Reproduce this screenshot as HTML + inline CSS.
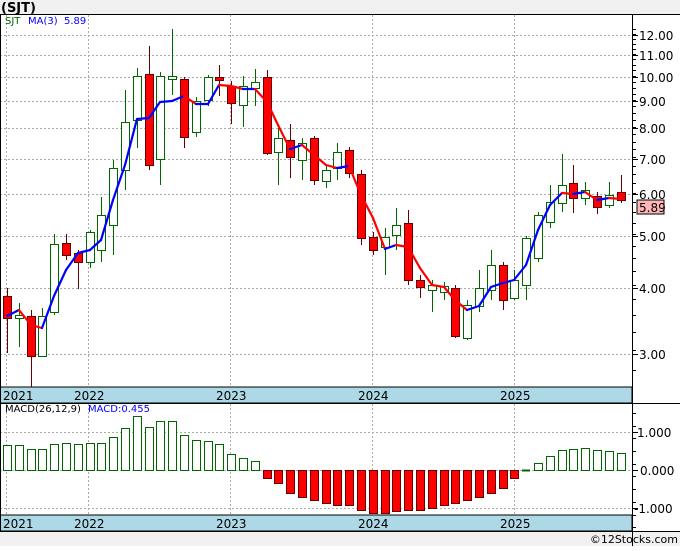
<!DOCTYPE html>
<html><head><meta charset="utf-8"><style>
body{margin:0;width:680px;height:546px;background:#fff;overflow:hidden;font-family:"Liberation Sans",sans-serif}
</style></head><body>
<svg id="s" width="680" height="546" xmlns="http://www.w3.org/2000/svg" font-family="DejaVu Sans, sans-serif">
<rect x="0" y="0" width="680" height="546" fill="#fff"/>
<rect x="0" y="0" width="680" height="14" fill="#f0f0f0"/>
<rect x="0" y="531" width="680" height="15" fill="#f0f0f0"/>
<text x="1" y="12" font-size="13" font-weight="bold" fill="#000">(SJT)</text>
<line x1="0" y1="14.5" x2="680" y2="14.5" stroke="#000"/>
<g id="grid" stroke="#aaa" stroke-dasharray="2,2"></g>
<rect x="0" y="387" width="632" height="16" fill="#add8e6" stroke="#000"/>
<rect x="0" y="515" width="632" height="16" fill="#add8e6" stroke="#000"/>
<g font-size="12" fill="#000">
<text x="3" y="400">2021</text><text x="74" y="400">2022</text><text x="216" y="400">2023</text><text x="358" y="400">2024</text><text x="500" y="400">2025</text>
<text x="3" y="528">2021</text><text x="74" y="528">2022</text><text x="216" y="528">2023</text><text x="358" y="528">2024</text><text x="500" y="528">2025</text>
</g>
<line x1="632.5" y1="14" x2="632.5" y2="546" stroke="#000"/>
<line x1="0" y1="403.5" x2="680" y2="403.5" stroke="#000"/>
<line x1="0" y1="531.5" x2="680" y2="531.5" stroke="#000"/>
<line x1="0.5" y1="14" x2="0.5" y2="531" stroke="#000"/>
<g id="c"></g>
<g id="ax" font-size="12" fill="#000"></g>
<text x="5" y="24" font-size="10" fill="#006400">SJT</text>
<text x="28" y="24" font-size="10" fill="#0000ff">MA(3)</text>
<text x="64" y="24" font-size="10" fill="#0000ff">5.89</text>
<text x="5" y="412" font-size="10" fill="#000">MACD(26,12,9)</text>
<text x="88" y="412" font-size="10" fill="#0000ff">MACD:0.455</text>
<rect x="637" y="200" width="27" height="14" fill="#ffb6b6" stroke="#000"/>
<text x="639" y="212" font-size="12" fill="#000">5.89</text>
<text x="678" y="543" font-size="11" fill="#000" text-anchor="end">©12Stocks.com</text>
</svg>
<script>
var N="http://www.w3.org/2000/svg",g=document.getElementById('c'),gr=document.getElementById('grid'),ax=document.getElementById('ax');
function el(p,t,a){var e=document.createElementNS(N,t);for(var k in a)e.setAttribute(k,a[k]);p.appendChild(e);return e}
[6,88,230,372,514].forEach(function(x){el(gr,'line',{x1:x+.5,y1:15,x2:x+.5,y2:387});el(gr,'line',{x1:x+.5,y1:404,x2:x+.5,y2:515})});
var Y=function(p){return 35+Math.log(12/p)*230};
[12,11,10,9,8,7,6,5,4,3].forEach(function(p){var y=Math.round(Y(p));el(gr,'line',{x1:0,y1:y+.5,x2:632,y2:y+.5});el(ax,'line',{x1:632,y1:y+.5,x2:638,y2:y+.5,stroke:'#000'});var t=el(ax,'text',{x:639,y:y+5});t.textContent=p.toFixed(2)});
for(var p=2.8;p<12.5;p+=0.25){var y=Math.round(Y(p));if(y>15&&y<387)el(ax,'line',{x1:632,y1:y+.5,x2:636,y2:y+.5,stroke:'#000'})}
[[432,'1.000',637],[470,'0.000',640],[508,'-1.000',634]].forEach(function(a){el(gr,'line',{x1:0,y1:a[0]+.5,x2:632,y2:a[0]+.5});el(ax,'line',{x1:632,y1:a[0]+.5,x2:638,y2:a[0]+.5,stroke:'#000'});var t=el(ax,'text',{x:a[2],y:a[0]+5});t.textContent=a[1]});
for(var y=413;y<531;y+=12.7)el(ax,'line',{x1:632,y1:Math.round(y)+.5,x2:636,y2:Math.round(y)+.5,stroke:'#000'});
var C=[['r',296,318,288,353],['g',315,318,303,347],['r',316,356,310,387],['g',316,356,308,357],['g',244,312,234,315],['r',243,255,234,260],['r',253,262,250,289],['g',232,262,230,268],['g',215,250,197,262],['g',168,225,160,255],['g',122,170,90,190],['g',76,120,68,148],['r',74,165,46,170],['g',76,159,72,185],['g',76,79,29,95],['r',79,137,77,148],['g',101,132,97,137],['g',77,100,75,106],['r',77,80,65,96],['r',86,103,81,124],['g',86,105,76,127],['g',82,88,69,106],['r',77,153,70,155],['g',138,152,128,185],['r',140,157,124,178],['g',143,160,138,180],['r',138,180,136,185],['g',170,181,165,188],['g',152,168,143,180],['r',150,173,147,178],['r',174,238,170,245],['r',237,250,232,255],['g',237,247,228,275],['g',225,235,208,250],['r',223,280,210,285],['r',280,287,275,298],['g',285,290,280,312],['g',286,292,282,300],['r',288,336,285,338],['g',305,338,300,340],['g',288,306,270,312],['g',265,290,250,300],['r',265,300,262,310],['g',280,298,270,300],['g',238,285,236,300],['g',215,258,212,262],['g',202,222,185,228],['g',185,203,154,212],['r',183,198,165,213],['g',190,198,182,205],['r',196,207,192,214],['g',195,205,182,208],['r',192,200,175,203]];
var X=function(i){return Math.round(7+i*11.8)};
C.forEach(function(c,i){var x=X(i),r=c[0]=='r';el(g,'line',{x1:x+.5,y1:c[3],x2:x+.5,y2:c[4],stroke:r?'#600':'#060','stroke-width':1});el(g,'rect',{x:x-3.5,y:c[1]+.5,width:8,height:Math.max(c[2]-c[1],1),fill:r?'#f00':'#fff',stroke:r?'#600':'#060'})});
var M=[316,310,325,328,296,270,253,250,240,200,165,119,118,102,101,96,104,104,85,86,89,89,102,125,149,145,155,165,168,166,195,218,249,245,247,268,285,287,300,310,306,287,283,280,265,230,205,193,194,192,200,198,199];
for(var i=1;i<M.length;i++)el(g,'line',{x1:X(i-1),y1:M[i-1],x2:X(i),y2:M[i],stroke:M[i]>M[i-1]?'#f00':'#00f','stroke-width':2.2,'stroke-linecap':'round'});
var H=[445,445,449,449,444,443,444,443,443,437,428,416,427,421,421,435,440,441,444,454,458,461,478,483,493,497,500,503,505,505,510,513,513,511,510,510,508,505,503,500,497,493,488,478,471,463,456,450,449,448,450,451,453];
H.forEach(function(h,i){var x=X(i),r=h>470;if(i==44){el(g,'line',{x1:x-4,y1:470.5,x2:x+4,y2:470.5,stroke:'#060','stroke-width':2});return}
el(g,'rect',{x:x-3.5,y:(r?470:h)+.5,width:8,height:Math.abs(h-470),fill:r?'#f00':'#fff',stroke:r?'#600':'#060'})});
</script>
</body></html>
